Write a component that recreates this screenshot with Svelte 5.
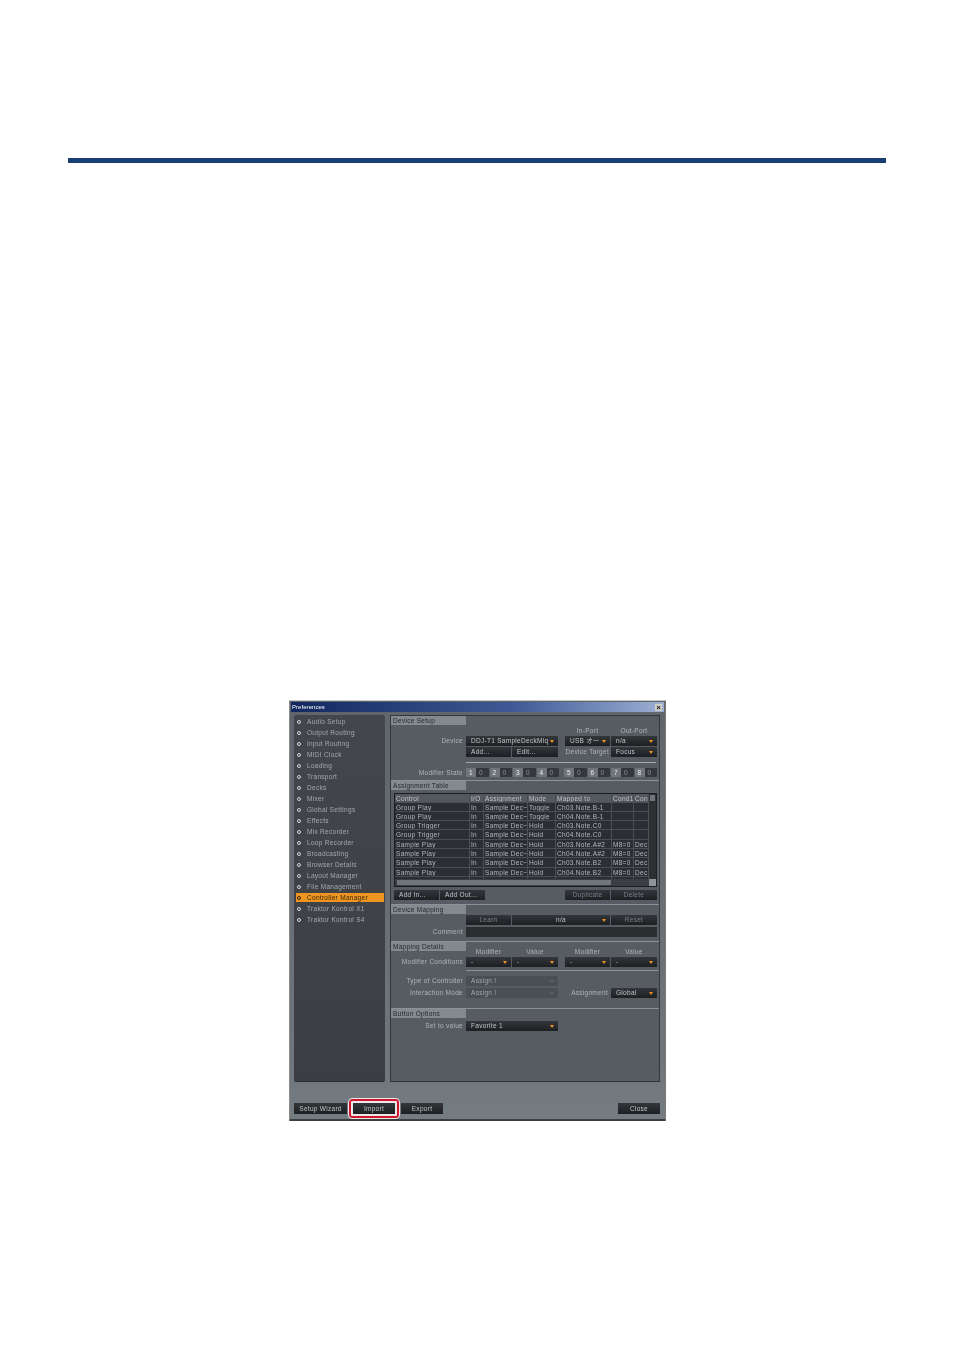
<script>
  const prefs = [
    'Audio Setup', 'Output Routing', 'Input Routing', 'MIDI Clock', 'Loading', 'Transport',
    'Decks', 'Mixer', 'Global Settings', 'Effects', 'Mix Recorder', 'Loop Recorder',
    'Broadcasting', 'Browser Details', 'Layout Manager', 'File Management',
    'Controller Manager', 'Traktor Kontrol X1', 'Traktor Kontrol S4'
  ];

  const columns = ['Control', 'I/O', 'Assignment', 'Mode', 'Mapped to', 'Cond1', 'Con'];

  const rows = [
    ['Group Play', 'In', 'Sample Dec~', 'Toggle', 'Ch03.Note.B-1', '', ''],
    ['Group Play', 'In', 'Sample Dec~', 'Toggle', 'Ch04.Note.B-1', '', ''],
    ['Group Trigger', 'In', 'Sample Dec~', 'Hold', 'Ch03.Note.C0', '', ''],
    ['Group Trigger', 'In', 'Sample Dec~', 'Hold', 'Ch04.Note.C0', '', ''],
    ['Sample Play', 'In', 'Sample Dec~', 'Hold', 'Ch03.Note.A#2', 'M8=0', 'Dec'],
    ['Sample Play', 'In', 'Sample Dec~', 'Hold', 'Ch04.Note.A#2', 'M8=0', 'Dec'],
    ['Sample Play', 'In', 'Sample Dec~', 'Hold', 'Ch03.Note.B2', 'M8=0', 'Dec'],
    ['Sample Play', 'In', 'Sample Dec~', 'Hold', 'Ch04.Note.B2', 'M8=0', 'Dec'],
    ['Sample Play', 'In', 'Sample Dec~', 'Hold', 'Ch03.Note.C3', 'M8=0', 'Dec']
  ];
</script>

<div class="page">
  <div class="rule"></div>

  <div class="window">
    <div class="titlebar">
      <span>Preferences</span>
      <span class="close-x">×</span>
    </div>

    <div class="main">
      <ul class="sidebar">
        {#each prefs as name}
          <li class:active={name === 'Controller Manager'}>
            <span class="dot"></span>{name}
          </li>
        {/each}
      </ul>

      <div class="content">
        <section class="device-setup">
          <h4>Device Setup</h4>
          <div class="row ports">
            <span class="label"></span>
            <span class="spacer"></span>
            <span class="caption w45">In-Port</span>
            <span class="caption w46">Out-Port</span>
          </div>
          <div class="row">
            <span class="label">Device</span>
            <span class="ctl w92 drop">DDJ-T1 SampleDeckMiq</span>
            <span class="ctl w45 drop gap7">USB オー</span>
            <span class="ctl w46 drop">n/a</span>
          </div>
          <div class="row">
            <span class="label"></span>
            <span class="ctl w45">Add...</span>
            <span class="ctl w46">Edit...</span>
            <span class="inline-label">Device Target</span>
            <span class="ctl w46 drop">Focus</span>
          </div>
          <div class="divider"></div>
          <div class="row modifiers">
            <span class="label">Modifier State</span>
            {#each [1, 2, 3, 4, 5, 6, 7, 8] as n}
              <span class="mod" class:split={n === 5}><b>{n}</b>0</span>
            {/each}
          </div>
        </section>

        <section class="assignment">
          <h4>Assignment Table</h4>
          <div class="table">
            <div class="table-left">
              <div class="trow thead">
                {#each columns as col}<span>{col}</span>{/each}
              </div>
              <div class="tbody">
                {#each rows as row}
                  <div class="trow">
                    {#each row as cell}<span>{cell}</span>{/each}
                  </div>
                {/each}
              </div>
              <div class="hscroll"><div class="thumb"></div></div>
            </div>
            <div class="vscroll">
              <div class="vthumb"></div>
              <div class="corner"></div>
            </div>
          </div>
          <div class="row actions">
            <span class="ctl w45">Add In...</span>
            <span class="ctl w45">Add Out...</span>
            <span class="spacer-a"></span>
            <span class="ctl w45 center dim">Duplicate</span>
            <span class="ctl w46 center dim">Delete</span>
          </div>
        </section>

        <section class="mapping">
          <h4>Device Mapping</h4>
          <div class="row learn">
            <span class="label"></span>
            <span class="ctl w45 center dim">Learn</span>
            <span class="ctl w98 drop center">n/a</span>
            <span class="ctl w46 center dim">Reset</span>
          </div>
          <div class="row">
            <span class="label">Comment</span>
            <span class="ctl w191"></span>
          </div>
        </section>

        <section class="details">
          <h4>Mapping Details</h4>
          <div class="row ports short">
            <span class="label"></span>
            <span class="caption w45">Modifier</span>
            <span class="caption w46">Value</span>
            <span class="gap7"></span>
            <span class="caption w45">Modifier</span>
            <span class="caption w46">Value</span>
          </div>
          <div class="row">
            <span class="label">Modifier Conditions</span>
            <span class="ctl w45 drop">-</span>
            <span class="ctl w46 drop">-</span>
            <span class="ctl w45 drop gap7">-</span>
            <span class="ctl w46 drop">-</span>
          </div>
          <div class="divider lower"></div>
          <div class="row">
            <span class="label">Type of Controller</span>
            <span class="ctl w92 drop off">Assign !</span>
          </div>
          <div class="row second">
            <span class="label">Interaction Mode</span>
            <span class="ctl w92 drop off">Assign !</span>
            <span class="inline-label wide">Assignment</span>
            <span class="ctl w46 drop">Global</span>
          </div>
        </section>

        <section class="options">
          <h4>Button Options</h4>
          <div class="row set-value">
            <span class="label">Set to value</span>
            <span class="ctl w92 drop">Favorite 1</span>
          </div>
        </section>
      </div>
    </div>

    <div class="footer">
      <span class="ctl btn wizard center">Setup Wizard</span>
      <span class="import-ring"><span class="ctl btn import center">Import</span></span>
      <span class="ctl btn export center">Export</span>
      <span class="ctl btn closebtn center">Close</span>
    </div>
  </div>
</div>

<style>
  :global(body) {
    margin: 0;
    background: #fff;
  }

  .page {
    height: 1350px;
    padding-top: 158px;
    box-sizing: border-box;
    overflow: hidden;
  }

  .rule {
    width: 818px;
    height: 5px;
    margin-left: 68px;
    background: #1a3f73;
  }

  .window {
    width: 377px;
    height: 421px;
    margin: 537px 0 0 289px;
    box-sizing: border-box;
    background: linear-gradient(#5f656a, #6f767b 85%, #757c81);
    border: 1px solid #c9c9c6;
    border-left-color: #8a8a88;
    border-right-color: #77797b;
    border-bottom: 2px solid #3c3f42;
    border-radius: 1px;
    font-family: "Liberation Sans", Arial, "Noto Sans CJK JP", sans-serif;
    font-size: 6.5px;
    letter-spacing: 0.29px;
    color: #b2b6b9;
    filter: blur(0.35px);
    will-change: transform;
  }

  .titlebar {
    height: 10px;
    margin: 1px 1px 0;
    padding: 0 2px 0 1px;
    display: flex;
    align-items: center;
    justify-content: space-between;
    background: linear-gradient(90deg, #12285f, #3f5a96 60%, #9db0d4);
    color: #fff;
    font-size: 6px;
    letter-spacing: 0.05px;
  }

  .close-x {
    width: 7px;
    height: 7px;
    background: #d4d0c8;
    color: #111;
    font-size: 8px;
    line-height: 7px;
    text-align: center;
    letter-spacing: 0;
    font-weight: bold;
  }

  .main {
    display: flex;
    gap: 5px;
    margin: 3px 5px 0 4px;
    height: 367px;
  }

  .sidebar {
    width: 91px;
    margin: 0;
    padding: 1px 0 0 2px;
    box-sizing: border-box;
    list-style: none;
    background: linear-gradient(#43474b, #3b3f43);
    border-radius: 2px;
    border-bottom: 1px solid #2a2d30;
  }

  .sidebar li {
    height: 9px;
    margin-bottom: 2px;
    margin-right: 1px;
    display: flex;
    align-items: center;
    padding-top: 1px;
    box-sizing: border-box;
    color: #a5a9ac;
    line-height: 1;
  }

  .sidebar li:first-child {
    margin-top: 1px;
  }

  .sidebar li.active {
    background: #ee9420;
    color: #3a2a10;
  }

  .dot {
    width: 4px;
    height: 4px;
    margin: 0 6px 0 1px;
    border: 1px solid #d5d8da;
    border-radius: 50%;
    box-sizing: border-box;
  }

  .active .dot {
    border-color: #3a2a10;
  }

  .content {
    width: 270px;
    background: #565c61;
    border: 1px solid #33373a;
    box-sizing: border-box;
  }

  section {
    border-bottom: 1px solid #8b9195;
    box-sizing: border-box;
  }

  section.options {
    border-bottom: 0;
  }

  h4 {
    width: 75px;
    height: 9px;
    margin: 0;
    padding-left: 2px;
    box-sizing: border-box;
    background: #83898d;
    color: #24282b;
    font-size: 6.5px;
    font-weight: normal;
    line-height: 9px;
  }

  .device-setup {
    height: 65px;
  }

  .assignment {
    height: 124px;
  }

  .mapping {
    height: 37px;
  }

  .details {
    height: 67px;
  }

  .row {
    display: flex;
    height: 10px;
    margin-bottom: 1px;
    line-height: 10px;
  }

  .row.ports {
    height: 8px;
    margin-top: 2px;
    margin-bottom: 1px;
    line-height: 8px;
  }

  .row.ports.short {
    height: 6px;
    margin-top: -2px;
    margin-bottom: 2px;
    line-height: 6px;
  }

  .row.second {
    margin-top: 2px;
  }

  .row.learn {
    margin-top: 1px;
    margin-bottom: 2px;
  }

  .row.set-value {
    margin-top: 3px;
  }

  .label {
    width: 72px;
    margin-right: 3px;
    flex: none;
    text-align: right;
    white-space: nowrap;
  }

  .spacer {
    width: 99px;
  }

  .caption {
    text-align: center;
  }

  .ctl {
    position: relative;
    display: block;
    flex: none;
    height: 10px;
    box-sizing: border-box;
    padding-left: 5px;
    background: linear-gradient(#33363a, #1d1f22);
    color: #c2c5c8;
    line-height: 10px;
    white-space: nowrap;
    overflow: hidden;
  }

  .w45 {
    width: 45px;
    margin-right: 1px;
  }

  .w46 {
    width: 46px;
  }

  .w92 {
    width: 92px;
  }

  .w98 {
    width: 98px;
    margin-right: 1px;
  }

  .w191 {
    width: 191px;
    background: #2b2e31;
  }

  .gap7 {
    margin-left: 7px;
  }

  span.gap7:empty {
    width: 0;
  }

  .center {
    padding-left: 0;
    text-align: center;
  }

  .dim {
    color: #7b8084;
  }

  .off {
    background: #4a4f53;
    color: #a2a6a9;
  }

  .drop::after {
    content: '';
    position: absolute;
    right: 4px;
    top: 4px;
    border-style: solid;
    border-width: 3px 2.5px 0;
    border-color: #ee9420 transparent transparent;
  }

  .off::after {
    border-top-color: #5d6266;
  }

  .inline-label {
    width: 51px;
    flex: none;
    text-align: right;
    margin-right: 2px;
    white-space: nowrap;
  }

  .inline-label.wide {
    width: 50px;
    margin-right: 3px;
  }

  .divider {
    height: 1px;
    margin: 5px 3px 5px 75px;
    background: #a3a8ab;
  }

  .divider.lower {
    margin-top: 3px;
    margin-bottom: 5px;
    margin-right: 0;
    background: #8b9195;
  }

  .modifiers {
    height: 9px;
    line-height: 9px;
  }

  .mod {
    width: 22.5px;
    margin-right: 1px;
    color: #8d9296;
    background: #34373b;
    border-radius: 1px;
    box-sizing: border-box;
  }

  .mod b {
    display: inline-block;
    width: 10px;
    margin-right: 3px;
    background: #70757a;
    color: #eceeef;
    font-weight: normal;
    text-align: center;
  }

  .mod.split {
    margin-left: 4px;
  }

  .table {
    display: flex;
    width: 263px;
    height: 94px;
    margin: 3px 0 3px 3px;
    background: #2b2e32;
    border: 1px solid #1b1d1f;
    box-sizing: border-box;
  }

  .table-left {
    width: 254px;
    display: flex;
    flex-direction: column;
  }

  .trow {
    display: grid;
    grid-template-columns: 75px 14px 44px 28px 56px 22px 15px;
    height: 9.3px;
    line-height: 9.3px;
    border-bottom: 1px solid #4a4f53;
    box-sizing: border-box;
    color: #b4b8bb;
  }

  .trow span {
    padding-left: 1px;
    white-space: nowrap;
    overflow: hidden;
    border-right: 1px solid #4a4f53;
  }

  .thead {
    height: 8.5px;
    line-height: 9px;
    background: #54595e;
    color: #c0c3c6;
    flex: none;
  }

  .tbody {
    flex: 1;
    min-height: 0;
    overflow: hidden;
  }

  .hscroll {
    flex: none;
    height: 7px;
    padding: 1px 0 1px 2px;
    box-sizing: border-box;
    background: #3a3e42;
  }

  .thumb {
    width: 214px;
    height: 100%;
    background: #6f757a;
  }

  .vscroll {
    width: 7px;
    display: flex;
    flex-direction: column;
    justify-content: space-between;
    background: #2d3033;
  }

  .vthumb {
    height: 6px;
    margin: 1px;
    background: #6f757a;
  }

  .corner {
    height: 7px;
    background: #8d9397;
  }

  .actions {
    margin-left: 3px;
    margin-bottom: 0;
  }

  .spacer-a {
    width: 79px;
    flex: none;
  }

  .footer {
    display: flex;
    align-items: center;
    height: 24px;
    margin: 14px 5px 0 4px;
    position: relative;
  }

  .btn {
    height: 11px;
    line-height: 11px;
    padding: 0;
  }

  .wizard {
    width: 53px;
  }

  .import-ring {
    display: block;
    margin: 0 2px;
    padding: 2px;
    border: 2px solid #d3142a;
    border-radius: 3px;
    background: #e9e9e9;
    outline: 1px solid #e9e9e9;
  }

  .import {
    width: 42px;
  }

  .export {
    width: 42px;
  }

  .closebtn {
    width: 42px;
    margin-left: auto;
    margin-top: 1px;
  }
</style>
